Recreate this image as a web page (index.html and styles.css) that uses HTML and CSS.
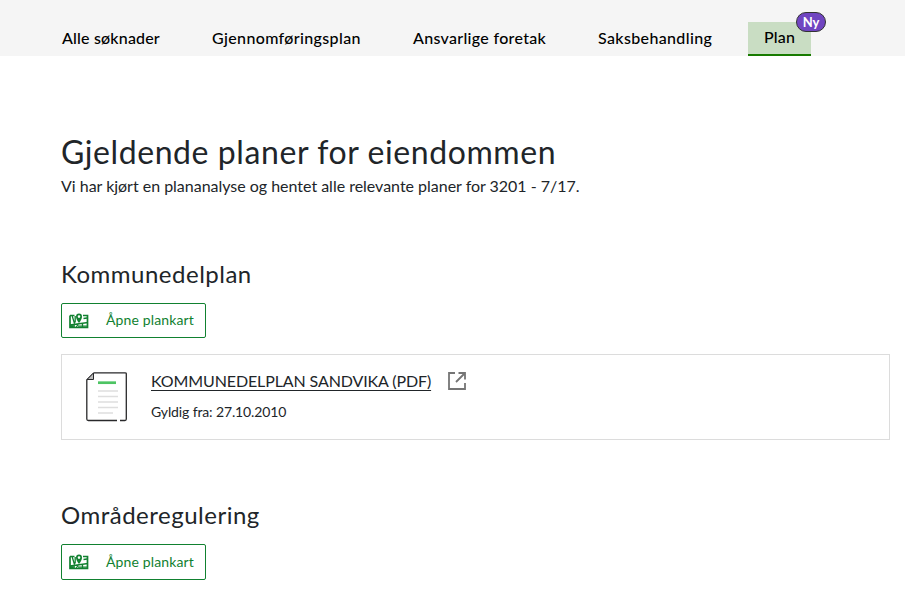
FILE: index.html
```html
<!DOCTYPE html>
<html lang="nb">
<head>
<meta charset="utf-8">
<title>Gjeldende planer</title>
<link rel="stylesheet" href="styles.css">
</head>
<body>
<svg class="sprite" aria-hidden="true">
  <symbol id="map" viewBox="0 0 20 16">
    <path d="M1 2.5H5.5M14 2.5H18.5V14.5H1V2.5" fill="none" stroke="currentColor" stroke-width="1.7"/>
    <path d="M3.2 3L5.5 10.5M6.2 3V9.5M1 12L19 9.5M7 14.5L9 11.5M13.5 10.5V14.5M14.5 5.5L18 5M1 13.5L6 13M9 13.2H18" fill="none" stroke="currentColor" stroke-width="1.3"/>
    <path fill-rule="evenodd" d="M10 10C8 7.3 7 5.5 7 3.7A3 3.3 0 0 1 13 3.7C13 5.5 12 7.3 10 10ZM10 2.3A1.3 1.3 0 1 0 10 4.9A1.3 1.3 0 1 0 10 2.3Z" fill="currentColor"/>
  </symbol>
</svg>
<nav class="tabs">
  <a class="tab tab-all">Alle søknader</a>
  <a class="tab tab-execution">Gjennomføringsplan</a>
  <a class="tab tab-firms">Ansvarlige foretak</a>
  <a class="tab tab-case">Saksbehandling</a>
  <a class="tab active">Plan<span class="badge">Ny</span></a>
</nav>
<main>
  <h1>Gjeldende planer for eiendommen</h1>
  <p class="intro">Vi har kjørt en plananalyse og hentet alle relevante planer for 3201 - 7/17.</p>
  <section class="plans">
    <h2>Kommunedelplan</h2>
    <button class="map-button"><svg class="map-icon"><use href="#map"/></svg><span>Åpne plankart</span></button>
    <article class="card">
      <svg class="document" viewBox="0 0 41 50">
        <path d="M34 48.5H39Q40.3 48.5 40.3 47V2Q40.3 .8 39 .8H8L.8 8V47Q.8 48.5 2.3 48.5H31" fill="none" stroke="#29292b" stroke-width="1.3"/>
        <path d="M7.5 1V7.5H1Z" fill="#bbb" stroke="#29292b"/>
        <path d="M12 10.7H30" stroke="#4dc463" stroke-width="2.7"/>
        <path d="M12 19H32M12 24.5H32M12 30H32M12 35.5H32M12 41H27" stroke="#dedede" stroke-width="1.4"/>
      </svg>
      <div>
        <div class="link-row"><a class="link">KOMMUNEDELPLAN SANDVIKA (PDF)</a>
          <svg class="external" viewBox="0 0 18 18"><path d="M7 1H1V17H17V11M10.5 1H17V7.5M17 1L8 10" fill="none" stroke="#757575" stroke-width="1.8"/></svg>
        </div>
        <p class="valid">Gyldig fra: 27.10.2010</p>
      </div>
    </article>
  </section>
  <section class="plans area">
    <h2>Områderegulering</h2>
    <button class="map-button tall"><svg class="map-icon"><use href="#map"/></svg><span>Åpne plankart</span></button>
  </section>
</main>
</body>
</html>
```
FILE: styles.css
```css
* { box-sizing: border-box; }
body { margin: 0; background: #fff; color: #212529; font-family: Lato, sans-serif; overflow: hidden; }
.sprite { display: none; }
.tabs { height: 56px; background: #f5f5f5; display: flex; align-items: flex-end; padding-left: 62px; color: #000; }
.tab { height: 34px; line-height: 32px; font-size: 16px; font-weight: 500; letter-spacing: .36px; flex: none; }
.tab-all { width: 150px; letter-spacing: .18px; }
.tab-execution { width: 201px; }
.tab-firms { width: 185px; letter-spacing: .31px; }
.tab-case { width: 150px; }
.active { position: relative; width: 63px; line-height: 30px; padding-left: 16px; letter-spacing: .2px; background: #c9ddc3; border-bottom: 2px solid #187b00; }
.badge { position: absolute; left: 48px; top: -10px; width: 30px; height: 20px; border: 1px solid #333; border-radius: 10px; background: #7045c1; color: #fff; font-size: 13px; font-weight: 700; line-height: 18px; text-align: center; letter-spacing: 0; }
main { padding: 76px 15px 0 61px; }
h1, h2, p { margin: 0; font-weight: 400; }
h1, h2, .intro, .link, .valid, .tab, .map-button span { white-space: nowrap; }
h1 { font-size: 32px; line-height: 40px; letter-spacing: .58px; }
.intro { font-size: 16px; line-height: 24px; margin-top: 2px; letter-spacing: -.015px; }
.plans { margin-top: 61px; }
.area { margin-top: 60px; }
h2 { font-size: 24px; line-height: 30px; letter-spacing: .5px; }
.map-button { display: flex; align-items: center; width: 145px; height: 35px; margin-top: 14px; padding: 0 0 0 7px; gap: 17px; border: 1px solid #118130; border-radius: 2px; background: #fff; color: #118130; font: 14px Lato, sans-serif; letter-spacing: .13px; }
.map-button span { padding-bottom: 2px; }
.tall { height: 36px; }
.map-icon { width: 20px; height: 16px; flex: none; }
.card { display: flex; height: 86px; margin-top: 16px; padding: 17px 0 0 24px; gap: 24px; border: 1px solid #dcdcdc; }
.document { width: 41px; height: 50px; flex: none; }
.link-row { display: flex; height: 20px; gap: 17px; }
.link { width: 280px; font-size: 16px; line-height: 18px; letter-spacing: -.11px; text-decoration: underline; text-underline-offset: 3px; text-decoration-thickness: 1px; }
.external { width: 18px; height: 18px; }
.valid { font-size: 14px; line-height: 20px; margin-top: 10px; letter-spacing: -.13px; }
```
